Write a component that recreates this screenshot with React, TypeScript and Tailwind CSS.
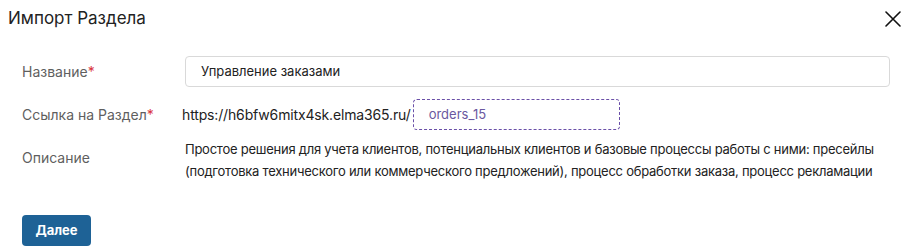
const font = { fontFamily: 'Inter, "Noto Sans", sans-serif' };

function Label({ text, required }: { text: string; required?: boolean }) {
  return (
    <div className="w-[160px] shrink-0 text-[14px] text-[#5f5f5f]">
      {text}
      {required && <span className="text-[#d9363e]">*</span>}
    </div>
  );
}

export default function App() {
  return (
    <div className="w-[909px] h-[250px] bg-white text-[#222] overflow-hidden" style={font}>
      <div className="flex items-center justify-between pl-[8px] pr-[8px] pt-[3px] h-[34px]">
        <h1 className="text-[17px] font-normal text-[#222]">Импорт Раздела</h1>
        <svg width="16" height="16" viewBox="0 0 16 16">
          <path d="M1 1 L15 15 M15 1 L1 15" stroke="#111" strokeWidth="1.6" strokeLinecap="round" />
        </svg>
      </div>

      <div className="pl-[22px] pr-[19px] pt-[22px] flex flex-col">
        <div className="flex items-center h-[31px]">
          <Label text="Название" required />
          <div className="ml-[3px] flex-1 h-[31px] border border-[#d9d9d9] rounded-[4px] flex items-center px-[15px] text-[13px] text-[#222]">
            Управление заказами
          </div>
        </div>

        <div className="flex items-center h-[31px] mt-[12px]">
          <Label text="Ссылка на Раздел" required />
          <span className="text-[14px] tracking-[-0.15px] text-[#222]">https://h6bfw6mitx4sk.elma365.ru/</span>
          <div className="ml-[2px] w-[207px] h-[31px] border border-dashed border-[#6a4fa8] rounded-[4px] flex items-center px-[15px] text-[13px] text-[#6a58a0]">
            orders_15
          </div>
        </div>

        <div className="flex mt-[10px]">
          <div className="pt-[7px]">
            <Label text="Описание" />
          </div>
          <p className="ml-[3px] text-[13px] leading-[22px] tracking-[-0.25px] whitespace-nowrap text-[#222] -mt-[2px]">
            Простое решения для учета клиентов, потенциальных клиентов и базовые процессы работы с ними: пресейлы
            <br />
            (подготовка технического или коммерческого предложений), процесс обработки заказа, процесс рекламации
          </p>
        </div>

        <div className="mt-[33px]">
          <button className="w-[69px] h-[31px] rounded-[4px] bg-[#1e6296] text-white text-[13px] font-bold">
            Далее
          </button>
        </div>
      </div>
    </div>
  );
}
